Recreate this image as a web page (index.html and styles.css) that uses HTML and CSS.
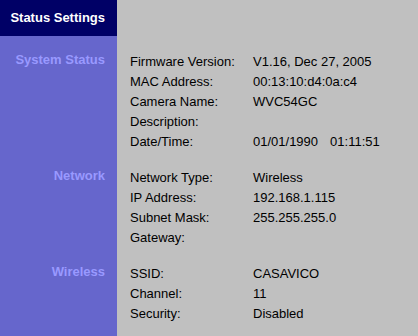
FILE: index.html
```html
<!DOCTYPE html>
<html lang="en">
<head>
    <meta charset="UTF-8">
    <title>Status Settings</title>
    <link rel="stylesheet" href="styles.css">
</head>
<body>
    <div class="page">
        <div class="title">Status Settings</div>
        <div class="blank"></div>

        <div class="side"><h3>System Status</h3></div>
        <div class="info">
            <div class="row"><span>Firmware Version:</span><span>V1.16, Dec 27, 2005</span></div>
            <div class="row"><span>MAC Address:</span><span>00:13:10:d4:0a:c4</span></div>
            <div class="row"><span>Camera Name:</span><span>WVC54GC</span></div>
            <div class="row"><span>Description:</span><span></span></div>
            <div class="row"><span>Date/Time:</span><span>01/01/1990<span class="time">01:11:51</span></span></div>
        </div>

        <div class="side"><h3>Network</h3></div>
        <div class="info">
            <div class="row"><span>Network Type:</span><span>Wireless</span></div>
            <div class="row"><span>IP Address:</span><span>192.168.1.115</span></div>
            <div class="row"><span>Subnet Mask:</span><span>255.255.255.0</span></div>
            <div class="row"><span>Gateway:</span><span></span></div>
        </div>

        <div class="side"><h3>Wireless</h3></div>
        <div class="info">
            <div class="row"><span>SSID:</span><span>CASAVICO</span></div>
            <div class="row"><span>Channel:</span><span>11</span></div>
            <div class="row"><span>Security:</span><span>Disabled</span></div>
        </div>

        <div class="side"></div>
        <div class="blank"></div>
    </div>
</body>
</html>
```

FILE: styles.css
```css
* {
    margin: 0;
    padding: 0;
    box-sizing: border-box;
}

body {
    font-family: "Liberation Sans", Arial, sans-serif;
    font-size: 13px;
    color: #000;
    background: #c0c0c0;
}

.page {
    display: grid;
    grid-template-columns: 117px 1fr;
    grid-template-rows: 36px auto auto auto 1fr;
    min-height: 100vh;
}

.title {
    background: #000066;
    color: #fff;
    font-weight: bold;
    line-height: 36px;
    text-align: right;
    padding-right: 12px;
}

.side {
    background: #6666cc;
    padding: 14px 12px 0 0;
}

.side h3 {
    color: #9999ff;
    font-size: 13px;
    font-weight: bold;
    line-height: 20px;
    text-align: right;
}

.info {
    padding: 16px 0 0 13px;
}

.row {
    display: grid;
    grid-template-columns: 123px 1fr;
    line-height: 20px;
}

.time {
    margin-left: 12px;
}
```
